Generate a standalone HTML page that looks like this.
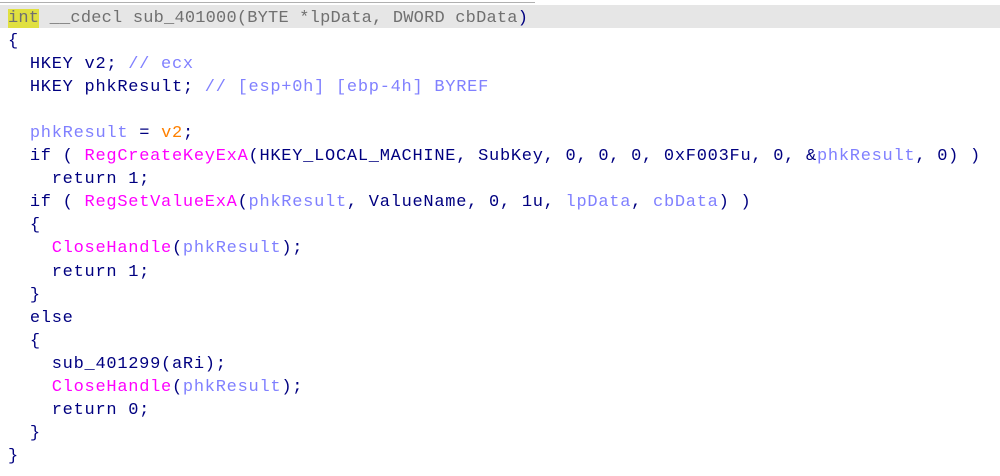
<!DOCTYPE html>
<html><head><style>
body{margin:0;width:1000px;height:476px;background:#fff;overflow:hidden;position:relative}
.band{position:absolute;left:0;top:5px;width:1000px;height:23px;background:#e6e6e6}
.tl{position:absolute;left:0;top:2px;width:535px;height:1px;background:#b0b0b0}
pre{position:absolute;left:8px;top:7px;margin:0;font-family:"Liberation Mono",monospace;font-size:17px;letter-spacing:0.73px;line-height:23.05px;color:#000080}
.l1{letter-spacing:0.2px}
.g{color:#707070}.y{background:#e0e040}.v{color:#8080ff}.f{color:#ff00ff}.o{color:#ff8000}
</style></head><body>
<div class="band"></div><div class="tl"></div>
<pre><span class="l1"><span class="g"><span class="y">int</span> __cdecl sub_401000(BYTE *lpData, DWORD cbData</span>)</span>
{
  HKEY v2; <span class="v">// ecx</span>
  HKEY phkResult; <span class="v">// [esp+0h] [ebp-4h] BYREF</span>

  <span class="v">phkResult</span> = <span class="o">v2</span>;
  if ( <span class="f">RegCreateKeyExA</span>(HKEY_LOCAL_MACHINE, SubKey, 0, 0, 0, 0xF003Fu, 0, &amp;<span class="v">phkResult</span>, 0) )
    return 1;
  if ( <span class="f">RegSetValueExA</span>(<span class="v">phkResult</span>, ValueName, 0, 1u, <span class="v">lpData</span>, <span class="v">cbData</span>) )
  {
    <span class="f">CloseHandle</span>(<span class="v">phkResult</span>);
    return 1;
  }
  else
  {
    sub_401299(aRi);
    <span class="f">CloseHandle</span>(<span class="v">phkResult</span>);
    return 0;
  }
}</pre>
</body></html>
